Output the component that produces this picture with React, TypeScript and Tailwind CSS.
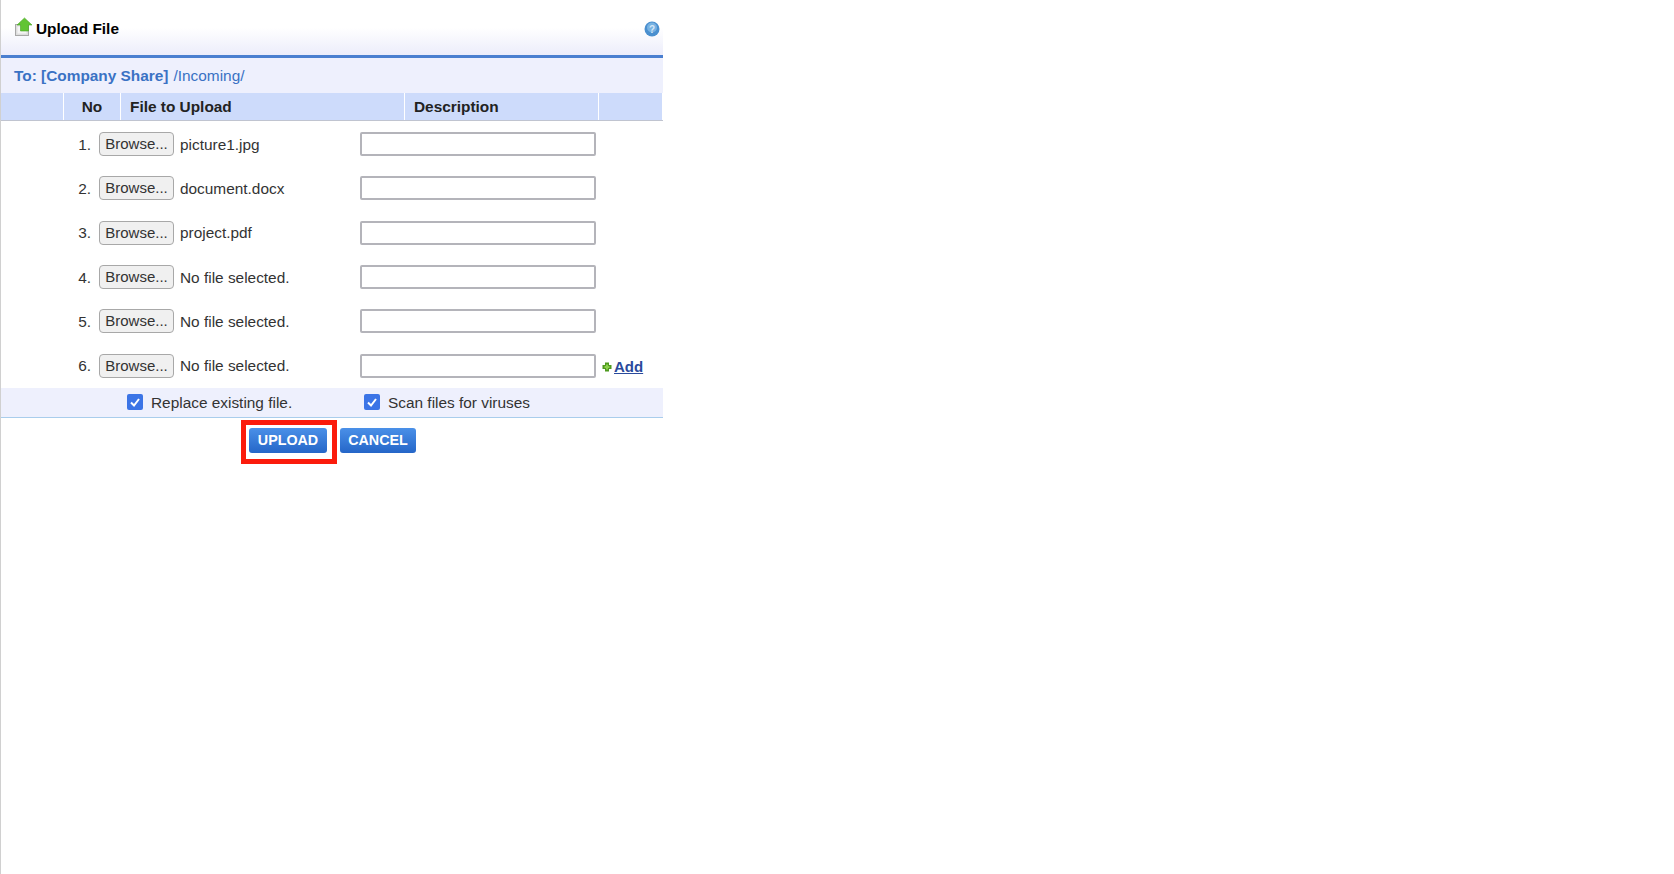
const files = ['picture1.jpg', 'document.docx', 'project.pdf', 'No file selected.', 'No file selected.', 'No file selected.'];

function UploadIcon() {
  return (
    <svg width="20" height="20" viewBox="0 0 20 20" className="shrink-0">
      <rect x="1.5" y="7.5" width="13" height="11" fill="#dedede" stroke="#a8a8a8" />
      <rect x="3.5" y="9.5" width="9" height="7" fill="#f5f5f5" />
      <path d="M10.5 1 L18 8 L14.5 8 L14.5 14 L6.5 14 L6.5 8 L3 8 Z" fill="#62c434" stroke="#48a524" strokeWidth="0.6" />
    </svg>
  );
}

function HelpIcon() {
  return (
    <svg width="16" height="16" viewBox="0 0 16 16" className="mt-[3px]">
      <circle cx="8" cy="8" r="7.5" fill="#4a8fcf" />
      <circle cx="8" cy="6.5" r="5" fill="#78b2e2" />
      <text x="8" y="11.5" textAnchor="middle" fontSize="10" fontWeight="700" fill="#d5e7f7" fontFamily="Liberation Sans, sans-serif">?</text>
    </svg>
  );
}

function PlusIcon() {
  return (
    <svg width="10" height="10" viewBox="0 0 10 10" className="shrink-0">
      <path d="M3 0.5 H7 V3 H9.5 V7 H7 V9.5 H3 V7 H0.5 V3 H3 Z" fill="#4e9a1e" />
      <path d="M4 2.5 H6 V4 H7.5 V6 H6 V7.5 H4 V6 H2.5 V4 H4 Z" fill="#8ed04e" />
    </svg>
  );
}

function Check({ label, className }: { label: string; className: string }) {
  return (
    <label className={`flex items-center gap-2 ${className}`}>
      <span className="flex h-4 w-4 items-center justify-center rounded-[2px] bg-[#3b74e6]">
        <svg width="12" height="12" viewBox="0 0 12 12">
          <path d="M2 6.5 L5 9.5 L10 3" fill="none" stroke="#fff" strokeWidth="2" />
        </svg>
      </span>
      <span>{label}</span>
    </label>
  );
}

export default function App() {
  return (
    <div className="min-h-[874px] border-l border-[#d0d0d0] bg-white font-['Liberation_Sans',Arial,sans-serif] text-[15.4px] text-[#333]">
      <div className="w-[662px]">
        {/* title */}
        <div className="flex h-[55px] items-center justify-between bg-gradient-to-b from-white from-50% to-[#ecedfb] pl-[13px] pr-[3px]">
          <div className="flex items-center gap-[2px] pt-[3px]">
            <div className="-mt-[4px]"><UploadIcon /></div>
            <span className="font-bold text-black">Upload File</span>
          </div>
          <HelpIcon />
        </div>
        <div className="h-[3px] bg-[#4a7fd0]" />

        {/* target folder */}
        <div className="flex h-[35px] items-center bg-[#eef0fd] pl-[13px] text-[#3a72c4]">
          <span className="font-bold">To: [Company Share]</span>
          <span className="ml-[5px]">/Incoming/</span>
        </div>

        {/* table head */}
        <div className="flex h-[28px] border-b border-[#c0c4d0] font-bold leading-[28px] text-[#222]">
          <div className="w-[62px] bg-[#cddbfb]" />
          <div className="ml-[1px] w-[56px] bg-[#cddbfb] text-center">No</div>
          <div className="ml-[1px] w-[283px] bg-[#cddbfb] pl-[9px]">File to Upload</div>
          <div className="ml-[1px] w-[193px] bg-[#cddbfb] pl-[9px]">Description</div>
          <div className="ml-[1px] w-[63px] bg-[#cddbfb]" />
        </div>

        {/* file rows */}
        <div className="pt-[1px]">
          {files.map((name, i) => (
            <div key={i} className="flex h-[44.33px] items-center">
              <span className="w-[90px] text-right">{i + 1}.</span>
              <button className="ml-[8px] h-[24px] w-[75px] rounded-[4px] border border-[#a8a8a8] bg-[#f0f0f0] text-[15px] text-[#333]">
                Browse...
              </button>
              <span className="ml-[6px] w-[180px]">{name}</span>
              <div className="h-[24px] w-[236px] rounded-[2px] border-2 border-[#b4b4ba] bg-white" />
              {i === 5 && (
                <div className="ml-[6px] mt-[3px] flex items-center gap-[2px]">
                  <PlusIcon />
                  <a className="text-[15px] font-bold text-[#2a4a9c] underline">Add</a>
                </div>
              )}
            </div>
          ))}
        </div>

        {/* options */}
        <div className="flex h-[30px] items-center border-b border-[#a9cdec] bg-[#eef0fd]">
          <Check label="Replace existing file." className="ml-[126px] w-[237px]" />
          <Check label="Scan files for viruses" className="" />
        </div>

        {/* actions */}
        <div className="mt-[2px] flex items-start pl-[240px]">
          <div className="border-[5px] border-[#fb1b0c] pb-[6px] pl-[3px] pr-[5px] pt-[3px]">
            <button className="block h-[25px] w-[78px] rounded-[3px] bg-gradient-to-b from-[#4a90e8] to-[#2566c8] text-[14.3px] font-bold text-white">
              UPLOAD
            </button>
          </div>
          <button className="ml-[3px] mt-[8px] h-[25px] w-[76px] rounded-[3px] bg-gradient-to-b from-[#4a90e8] to-[#2566c8] text-[14.3px] font-bold text-white">
            CANCEL
          </button>
        </div>
      </div>
    </div>
  );
}
